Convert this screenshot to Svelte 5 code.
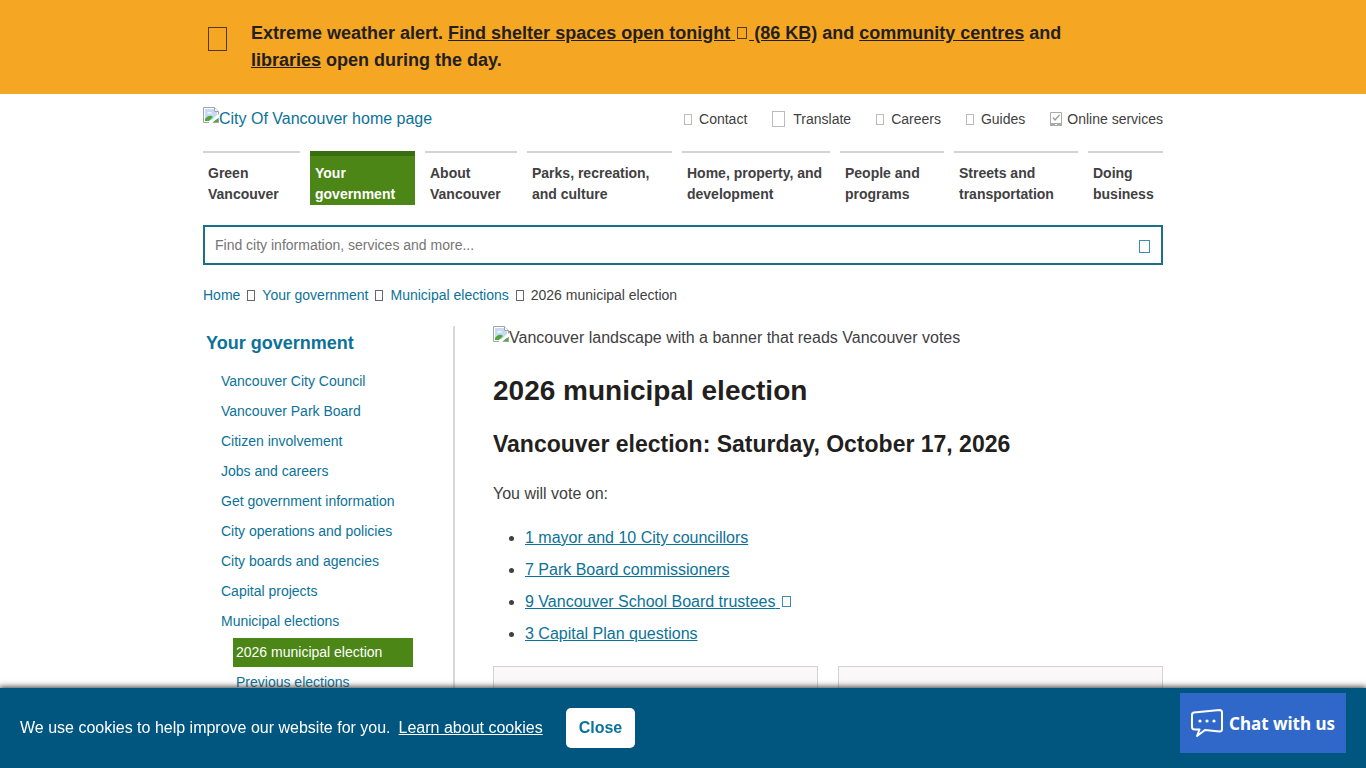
<script>
  let query = $state('');
  let showCookies = $state(true);

  const utilities = [
    { label: 'Contact', icon: 'small' },
    { label: 'Translate', icon: 'large' },
    { label: 'Careers', icon: 'small' },
    { label: 'Guides', icon: 'small' },
    { label: 'Online services', icon: 'services' },
  ];

  const sections = [
    'Green Vancouver',
    'Your government',
    'About Vancouver',
    'Parks, recreation, and culture',
    'Home, property, and development',
    'People and programs',
    'Streets and transportation',
    'Doing business',
  ];
  const current = 'Your government';

  const crumbs = ['Home', 'Your government', 'Municipal elections'];

  const sideLinks = [
    'Vancouver City Council',
    'Vancouver Park Board',
    'Citizen involvement',
    'Jobs and careers',
    'Get government information',
    'City operations and policies',
    'City boards and agencies',
    'Capital projects',
    'Municipal elections',
  ];

  const votes = [
    { label: '1 mayor and 10 City councillors' },
    { label: '7 Park Board commissioners' },
    { label: '9 Vancouver School Board trustees', external: true },
    { label: '3 Capital Plan questions' },
  ];
</script>

{#snippet picture()}
  <svg class="picture" width="16" height="16" viewBox="0 0 16 16" aria-hidden="true">
    <path d="M.5 15.5V.5h11l4 4V9" fill="#fff" stroke="#a3a3a3" />
    <path d="M2 2h9v3h3v3l-5 5H2z" fill="#c6d9f5" />
    <path d="M4 6.500a2 2 0 0 1 3-1 1.500 1.500 0 0 1 2 1z" fill="#fff" />
    <path d="M2 14v-2c3-4 6-4 8-2l-4 4z" fill="#4ea63d" />
    <path d="M11.500.5v4h4" fill="#fff" stroke="#a3a3a3" />
    <path d="M8 15.500h7.500V11z" fill="#4ea63d" />
    <path d="M6 16 16 7v3l-7 6z" fill="#fff" />
    <path d="M.5 15.500H6M10 15.500h5.500V11" fill="none" stroke="#a3a3a3" />
  </svg>
{/snippet}

<div class="alert">
  <div class="wrap alert-inner">
    <span class="glyph alert-icon"></span>
    <p>
      Extreme weather alert.
      <a href="#shelter">Find shelter spaces open tonight <span class="glyph bold"></span> (86 KB)</a>
      and <a href="#centres">community centres</a> and <a href="#libraries">libraries</a> open during the day.
    </p>
  </div>
</div>

<div class="wrap">
  <header>
    <a class="logo" href="#home">{@render picture()}City Of Vancouver home page</a>
    <ul class="utilities">
      {#each utilities as item}
        <li>
          <a href="#{item.label}">
            {#if item.icon === 'services'}
              <svg width="12" height="14" viewBox="0 0 12 14" aria-hidden="true">
                <path d="M.5.500h11v13H.5z" fill="none" stroke="#aaa" />
                <path d="M0 11h12v3H0z" fill="#aaa" />
                <path d="m3 5.500 2 2.500 4.500-5" fill="none" stroke="#999" stroke-width="1.300" />
                <path d="M5 12h2v1H5z" fill="#fff" />
              </svg>
            {:else}
              <span class="glyph {item.icon}"></span>
            {/if}
            {item.label}
          </a>
        </li>
      {/each}
    </ul>
  </header>

  <nav class="sections">
    {#each sections as section}
      <a href="#{section}" class:active={section === current}>{section}</a>
    {/each}
  </nav>

  <form class="search" onsubmit={(e) => e.preventDefault()}>
    <input type="text" bind:value={query} placeholder="Find city information, services and more..." aria-label="Search" />
    <button type="submit" aria-label="Search"><span class="glyph search-icon"></span></button>
  </form>

  <nav class="crumbs">
    {#each crumbs as crumb}
      <a href="#{crumb}">{crumb}</a>
      <span class="glyph"></span>
    {/each}
    <span>2026 municipal election</span>
  </nav>

  <div class="columns">
    <aside>
      <h2><a href="#government">Your government</a></h2>
      <ul>
        {#each sideLinks as link}
          <li><a href="#{link}">{link}</a></li>
        {/each}
      </ul>
      <ul class="sub">
        <li class="here"><a href="#election">2026 municipal election</a></li>
        <li><a href="#previous">Previous elections</a></li>
      </ul>
    </aside>

    <main>
      <div class="banner">{@render picture()}Vancouver landscape with a banner that reads Vancouver votes</div>
      <h1>2026 municipal election</h1>
      <h2>Vancouver election: Saturday, October 17, 2026</h2>
      <p>You will vote on:</p>
      <ul>
        {#each votes as vote}
          <li>
            <a href="#{vote.label}">{vote.label}{#if vote.external}{' '}<span class="glyph ext"></span>{/if}</a>
          </li>
        {/each}
      </ul>
      <div class="cards">
        <div class="card"></div>
        <div class="card"></div>
      </div>
    </main>
  </div>
</div>

{#if showCookies}
  <div class="cookies">
    <span>We use cookies to help improve our website for you.</span>
    <a href="#cookies">Learn about cookies</a>
    <button onclick={() => (showCookies = false)}>Close</button>
  </div>
{/if}

<button class="chat">
  <svg width="32" height="28" viewBox="0 0 32 28" fill="none" stroke="#fff" stroke-width="2" stroke-linejoin="round" aria-hidden="true">
    <path d="M3 3.500 28.500 1Q31 1 31 3.500V20q0 2.500-2.500 2.500L14 21l-8 6 2.500-6.500H4Q1 20.500 1 18V6q0-2.300 2-2.500z" />
    <g fill="#fff" stroke="none">
      <circle cx="9" cy="12" r="1.600" />
      <circle cx="16" cy="12" r="1.600" />
      <circle cx="23" cy="12" r="1.600" />
    </g>
  </svg>
  Chat with us
</button>

<style>
  :global(body) {
    margin: 0;
    font-family: 'Liberation Sans', Arial, sans-serif;
    font-size: 16px;
    line-height: 24px;
    color: #414042;
    background: #fff;
  }
  a { color: #0b7299; text-decoration: none; }
  ul { margin: 0; padding: 0; list-style: none; }
  .wrap {
    max-width: 960px;
    margin: 0 auto;
  }

  /* hollow box used for the icon font characters */
  .glyph {
    display: inline-block;
    box-sizing: border-box;
    width: 8px;
    height: 11px;
    border: 1px solid currentColor;
    opacity: 0.8;
  }

  .alert {
    background: #f5a623;
    color: #231f20;
    font-size: 18px;
    font-weight: bold;
    line-height: 27px;
  }
  .alert-inner {
    display: flex;
    align-items: flex-start;
    gap: 24px;
    padding: 20px 0;
  }
  .alert p { margin: 0 40px 0 0; }
  .alert a { color: inherit; text-decoration: underline; }
  .alert-icon {
    flex: none;
    width: 19px;
    height: 24px;
    margin: 7px 0 0 5px;
  }
  .glyph.bold {
    width: 10px;
    height: 12px;
    margin: 0 2px;
  }

  header {
    display: flex;
    justify-content: space-between;
    padding: 13px 0 20px;
  }
  .picture { vertical-align: top; }
  .utilities {
    display: flex;
    gap: 25px;
    font-size: 14px;
  }
  .utilities a {
    display: flex;
    align-items: center;
    gap: 5px;
    color: #414042;
  }
  .utilities .glyph {
    margin-right: 2px;
    border-color: #aaa;
  }
  .utilities .large {
    width: 13px;
    height: 16px;
    margin-right: 3px;
  }

  .sections {
    display: grid;
    grid-template-columns: 97fr 105fr 92fr 145fr 148fr 104fr 124fr 75fr;
    gap: 10px;
    font-size: 14px;
    font-weight: bold;
    line-height: 21px;
  }
  .sections a {
    padding: 10px 0 0 5px;
    border-top: 2px solid #d1d3d4;
    color: #414042;
  }
  .sections a.active {
    padding-top: 7px;
    border-top: 5px solid #3a6c10;
    background: #4b8616;
    color: #fff;
  }

  .search {
    display: flex;
    margin-top: 20px;
    border: 2px solid #1a7089;
  }
  .search input {
    flex: 1;
    height: 36px;
    box-sizing: border-box;
    padding: 0 10px;
    border: 0;
    outline: none;
    font: inherit;
    font-size: 14px;
    color: #414042;
  }
  .search input::placeholder { color: #757575; }
  .search button {
    display: flex;
    align-items: center;
    padding: 2px 11px 0;
    border: 0;
    background: none;
    color: #0b7299;
    cursor: pointer;
  }
  .search-icon { height: 13px; width: 11px; }

  .crumbs {
    display: flex;
    align-items: center;
    gap: 7px;
    padding: 20px 0;
    font-size: 14px;
    line-height: 21px;
  }

  .columns { display: flex; }
  aside {
    flex: none;
    box-sizing: border-box;
    width: 252px;
    padding: 4px 40px 0 3px;
    border-right: 2px solid #d8d9da;
    font-size: 14px;
    line-height: 30px;
  }
  aside h2 {
    margin: 0 0 10px;
    font-size: 18px;
    line-height: 26px;
  }
  aside li { padding-left: 15px; }
  .sub { margin-left: 27px; }
  .sub li { padding-left: 3px; }
  .sub .here {
    margin-top: 2px;
    background: #4b8616;
    line-height: 29px;
  }
  .here a { color: #fff; }

  main {
    flex: 1;
    padding: 0 0 120px 38px;
  }
  main h1 {
    margin: 23px 0 17px;
    font-size: 28px;
    line-height: 36px;
    color: #231f20;
  }
  main h2 {
    margin: 0 0 20px;
    font-size: 23px;
    line-height: 36px;
    color: #231f20;
  }
  main p { margin: 0 0 16px; }
  main ul {
    margin-bottom: 16px;
    padding-left: 32px;
    line-height: 32px;
    list-style: disc;
  }
  main li a { text-decoration: underline; }
  .glyph.ext { width: 9px; margin-left: 2px; }
  .cards {
    display: grid;
    grid-template-columns: 1fr 1fr;
    gap: 20px;
  }
  .card {
    min-height: 120px;
    border: 1px solid #d1d3d4;
    background: #faf8f8;
  }

  .cookies {
    position: fixed;
    left: 0;
    right: 0;
    bottom: 0;
    display: flex;
    align-items: center;
    gap: 8px;
    padding: 20px;
    background: #00567f;
    box-shadow: 0 0 6px 1px #333;
    color: #fff;
  }
  .cookies a { color: #fff; text-decoration: underline; }
  .cookies button {
    height: 40px;
    margin-left: 15px;
    padding: 0 13px;
    border: 0;
    border-radius: 5px;
    background: #fff;
    color: #0b7299;
    font: inherit;
    font-weight: bold;
    cursor: pointer;
  }

  .chat {
    position: fixed;
    right: 20px;
    bottom: 15px;
    display: flex;
    align-items: center;
    gap: 6px;
    height: 60px;
    padding: 0 11px;
    border: 0;
    background: #2f68c9;
    color: #fff;
    font: bold 17px 'Noto Sans', 'Open Sans', sans-serif;
    cursor: pointer;
  }
</style>
